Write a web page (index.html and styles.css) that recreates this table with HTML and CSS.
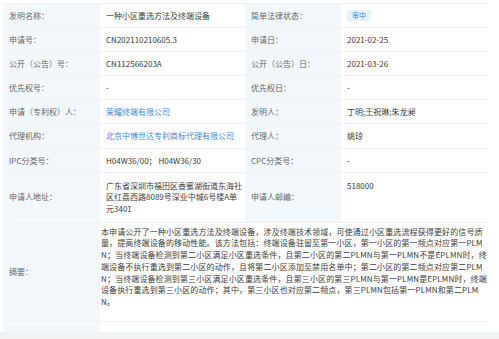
FILE: index.html
```html
<!DOCTYPE html>
<html lang="zh-CN">
<head>
<meta charset="utf-8">
<link rel="stylesheet" href="styles.css">
</head>
<body>
<div class="page">
  <div class="sheet">
    <div class="info">
      <div class="lab">发明名称：</div>
      <div class="val">一种小区重选方法及终端设备</div>
      <div class="lab">简单法律状态：</div>
      <div class="val"><span class="badge">审中</span></div>

      <div class="lab">申请号：</div>
      <div class="val">CN202110210605.3</div>
      <div class="lab">申请日：</div>
      <div class="val">2021-02-25</div>

      <div class="lab">公开（公告）号：</div>
      <div class="val">CN112566203A</div>
      <div class="lab">公开（公告）日：</div>
      <div class="val">2021-03-26</div>

      <div class="lab">优先权号：</div>
      <div class="val">-</div>
      <div class="lab">优先权日：</div>
      <div class="val">-</div>

      <div class="lab">申请（专利权）人：</div>
      <div class="val"><a class="link" href="#">荣耀终端有限公司</a></div>
      <div class="lab">发明人：</div>
      <div class="val">丁明;王祝琳;朱龙昶</div>

      <div class="lab">代理机构：</div>
      <div class="val"><a class="link" href="#">北京中博世达专利商标代理有限公司</a></div>
      <div class="lab">代理人：</div>
      <div class="val">姚琼</div>

      <div class="lab">IPC分类号：</div>
      <div class="val">H04W36/00； H04W36/30</div>
      <div class="lab">CPC分类号：</div>
      <div class="val">-</div>

      <div class="lab tall">申请人地址：</div>
      <div class="val tall">广东省深圳市福田区香蜜湖街道东海社<br>区红荔西路8089号深业中城6号楼A单<br>元3401</div>
      <div class="lab tall">申请人邮编：</div>
      <div class="val tall">518000</div>

      <div class="lab">摘要：</div>
      <div class="val abstract">本申请公开了一种小区重选方法及终端设备，涉及终端技术领域，可使通过小区重选流程获得更好的信号质<br>量，提高终端设备的移动性能。该方法包括：终端设备驻留至第一小区，第一小区的第一频点对应第一PLM<br>N；当终端设备检测到第二小区满足小区重选条件，且第二小区的第二PLMN与第一PLMN不是EPLMN时，终<br>端设备不执行重选到第二小区的动作，且将第二小区添加至禁用名单中；第二小区的第二频点对应第二PLM<br>N；当终端设备检测到第三小区满足小区重选条件，且第三小区的第三PLMN与第一PLMN是EPLMN时，终端<br>设备执行重选到第三小区的动作；其中，第三小区也对应第二频点，第三PLMN包括第一PLMN和第二PLM<br>N。</div>

      <div class="lab stub"></div>
      <div class="val stub wide"></div>
    </div>
  </div>
  <div class="footer"></div>
</div>
</body>
</html>
```
FILE: styles.css
```css
* { box-sizing: border-box; }
html, body {
  margin: 0;
  padding: 0;
  background: #ffffff;
}
body {
  font-family: "Noto Sans CJK SC", "Noto Sans", sans-serif;
  font-size: 8px;
  color: #3a3a3a;
  width: 499px;
  height: 339px;
  overflow: hidden;
}
.page {
  display: flex;
  flex-direction: column;
  height: 339px;
}
.sheet {
  padding: 3px 11px 0 3px;
  background: #fff;
}
.info {
  display: grid;
  grid-template-columns: 97px 145px 96px 147px;
  border-top: 1px solid #edf1f5;
  border-right: 1px solid #edf1f5;
}
.lab, .val {
  padding: 6px 6px 5.4px;
  line-height: 11.7px;
  border-bottom: 1px solid #edf1f5;
  display: flex;
  align-items: center;
  white-space: nowrap;
}
.lab {
  background: #f2f7fc;
  color: #666;
}
.val {
  background: #fff;
  color: #3a3a3a;
}
.tall {
  padding-top: 7px;
  padding-bottom: 7px;
}
.val.tall { display: block; }
.abstract {
  grid-column: span 3;
  display: block;
  padding: 3px 4px 13px 1px;
  line-height: 11.7px;
  letter-spacing: 0.12px;
}
.stub {
  height: 10px;
  padding: 0;
  border-bottom: none;
}
.wide { grid-column: span 3; }
.link {
  color: #3d88d6;
  text-decoration: none;
}
.badge {
  display: inline-block;
  background: #e6f1fc;
  color: #3a8ad8;
  padding: 0 5px;
  line-height: 11px;
  border-radius: 2px;
  font-size: 7px;
}
.footer {
  flex: 1;
  background: #f0f1f3;
}
```
